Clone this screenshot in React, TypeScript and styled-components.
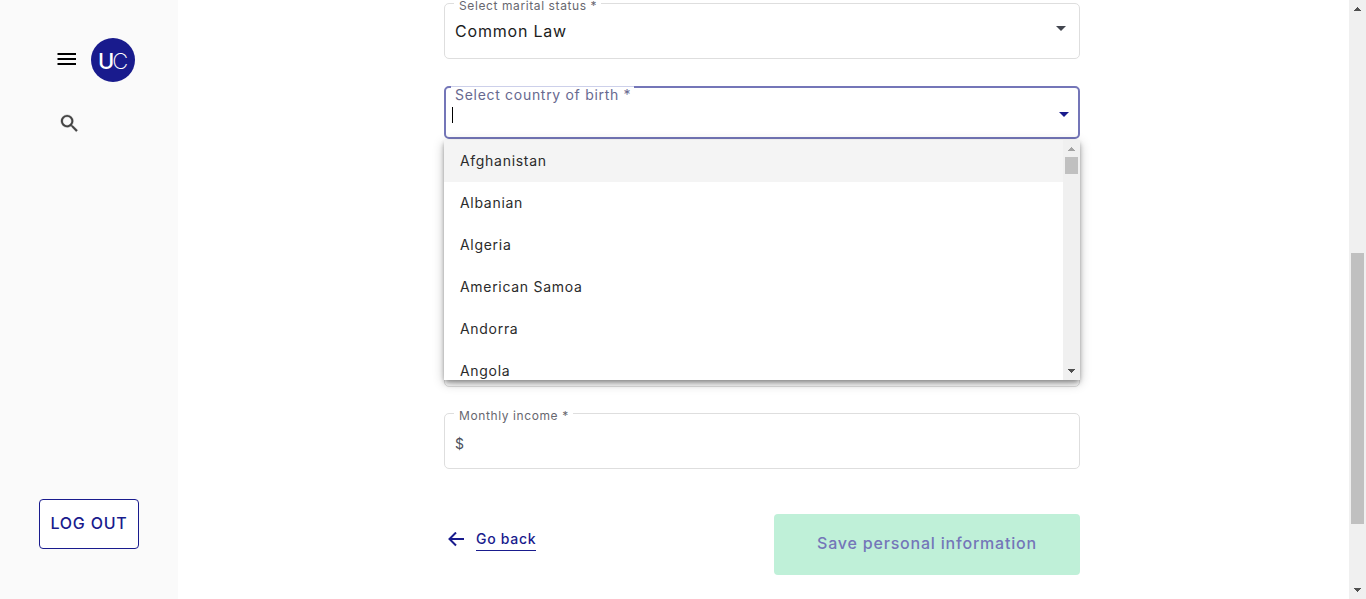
import React from "react";
import styled, { createGlobalStyle, css } from "styled-components";

const navy = "#191b8d";

const GlobalStyle = createGlobalStyle`
  *, *::before, *::after { box-sizing: border-box; letter-spacing: 0.05em; }
  body {
    margin: 0;
    background: #fff;
    font-family: Inter, "Liberation Sans", sans-serif;
    overflow: hidden;
  }
  button, input, select { font: inherit; }
`;

const Page = styled.div`
  display: flex;
  height: 100vh;
  overflow: hidden;
`;

const Sidebar = styled.aside`
  flex: 0 0 178px;
  display: flex;
  flex-direction: column;
  align-items: flex-start;
  padding: 38px 39px 50px;
  background: #fafafa;
`;

const Brand = styled.div`
  display: flex;
  align-items: center;
  gap: 13px;
  padding-left: 16px;
`;

const IconButton = styled.button`
  display: flex;
  padding: 0;
  border: 0;
  background: none;
  color: #000;
`;

const SearchButton = styled(IconButton)`
  margin: 30px 0 0 19px;
  color: #424242;
`;

const LogoText = styled.text`
  fill: #fff;
  font-size: 22px;
  font-weight: 500;

  tspan {
    font-weight: 200;
  }

  &, tspan {
    letter-spacing: 0;
  }
`;

const LogOut = styled.button`
  width: 100px;
  height: 50px;
  margin-top: auto;
  padding: 0 0 2px;
  border: 1px solid ${navy};
  border-radius: 4px;
  background: #fff;
  color: ${navy};
  font-size: 16px;
  font-weight: 500;
`;

const Main = styled.main`
  flex: 1;
  min-width: 0;
  padding: 3px 269px 0 266px;
`;

const Form = styled.form`
  display: flex;
  flex-direction: column;
  gap: 26px;
`;

const Slot = styled.div`
  display: flex;
  align-items: center;
  height: 56px;
`;

const Box = styled.div<{ $active?: boolean }>`
  position: relative;
  flex: 1;
  display: flex;
  height: 56px;
  border: 1px solid #dedede;
  border-radius: 5px;
  ${(p) =>
    p.$active &&
    css`
      height: 53px;
      margin-bottom: 1px;
      border: 2px solid #7476b8;
    `}
`;

const Label = styled.label<{ $active?: boolean }>`
  position: absolute;
  top: -6px;
  left: 9px;
  padding: 0 4px 0 5px;
  background: #fff;
  color: #67676f;
  font-size: 12px;
  line-height: 16px;
  white-space: nowrap;
  ${(p) =>
    p.$active &&
    css`
      top: -2px;
      left: 5px;
      padding: 0 3px 0 4px;
      border-top: 1px solid #cdd0ea;
      color: #67698f;
      font-size: 14px;
    `}
`;

const Select = styled.select`
  flex: 1;
  appearance: none;
  padding: 0 10px;
  border: 0;
  background: none;
  color: #1c1c1c;
  font-size: 16px;
`;

const TextInput = styled.input`
  flex: 1;
  min-width: 0;
  padding: 0 10px;
  border: 0;
  outline: 0;
  background: none;
  color: #1c1c1c;
  font-size: 16px;
`;

const Prefix = styled.span`
  align-self: center;
  padding: 6px 0 0 10px;
  color: #4a4f5a;
  font-size: 14px;
  line-height: 20px;
`;

const Caret = styled.span`
  position: absolute;
  top: 19px;
  left: 6px;
  width: 1px;
  height: 16px;
  background: #000;
`;

const Arrow = styled.svg<{ $active?: boolean }>`
  position: absolute;
  top: ${(p) => (p.$active ? 24 : 22)}px;
  right: ${(p) => (p.$active ? 9 : 13)}px;
  width: 10px;
  height: 5px;
  fill: ${(p) => (p.$active ? navy : "#42464f")};
`;

const Panel = styled.div`
  position: absolute;
  z-index: 1;
  top: 52px;
  left: -2px;
  right: -2px;
  display: flex;
  height: 240px;
  border-radius: 0 0 4px 4px;
  background: #fff;
  box-shadow: 0 2px 4px -1px rgba(0, 0, 0, 0.25), 0 4px 5px rgba(0, 0, 0, 0.16),
    0 3px 12px rgba(0, 0, 0, 0.24);
`;

const Options = styled.ul`
  flex: 1;
  height: 100%;
  margin: 0;
  padding: 0;
  overflow: hidden;
  list-style: none;
`;

const Option = styled.li<{ $hover?: boolean }>`
  height: 42px;
  padding: 0 16px;
  background: ${(p) => (p.$hover ? "#f4f4f4" : "#fff")};
  color: #2b2b2b;
  font-size: 14px;
  line-height: 42px;
`;

const Track = styled.div`
  flex: 0 0 17px;
  display: flex;
  flex-direction: column;
  align-items: center;
  justify-content: space-between;
  padding: 7px 0;
  background: #f0f0f0;
`;

const Rail = styled.div`
  flex: 1;
  align-self: stretch;
  display: flex;
  flex-direction: column;
  align-items: center;
  margin: 6px 0;
`;

const Thumb = styled.div<{ $size: number }>`
  flex: ${(p) => p.$size} 1 0;
  width: 13px;
  background: #c0c0c0;
`;

const Space = styled.div<{ $share: number }>`
  flex: ${(p) => p.$share} 1 0;
`;

const Actions = styled.div`
  display: flex;
  justify-content: space-between;
  margin-top: 19px;
`;

const Back = styled.a`
  display: flex;
  align-items: center;
  align-self: flex-start;
  gap: 11px;
  margin: 14px 0 0 4px;
  color: ${navy};
  font-size: 14px;
  font-weight: 500;
  line-height: 22px;
  text-decoration: none;
`;

const BackText = styled.span`
  border-bottom: 1px solid ${navy};
`;

const Save = styled.button`
  width: 306px;
  height: 61px;
  padding: 0 0 3px;
  border: 0;
  border-radius: 4px;
  background: #bff0d8;
  color: #7476b8;
  font-size: 16px;
  font-weight: 500;
`;

const countries = ["Afghanistan", "Albanian", "Algeria", "American Samoa", "Andorra", "Angola"];

function DropArrow({ active }: { active?: boolean }) {
  return (
    <Arrow $active={active} viewBox="0 0 10 5" aria-hidden="true">
      <path d="M0 0h10L5 5z" />
    </Arrow>
  );
}

function ScrollBar({ before, size, after, faded }: { before: number; size: number; after: number; faded?: boolean }) {
  return (
    <Track aria-hidden="true">
      <svg width="7" height="4" viewBox="0 0 7 4" shapeRendering="crispEdges">
        <path d="M3 0h1v1h1v1h1v1h1v1H0V3h1V2h1V1h1z" fill={faded ? "#a3a3a3" : "#505050"} />
      </svg>
      <Rail>
        <Space $share={before} />
        <Thumb $size={size} />
        <Space $share={after} />
      </Rail>
      <svg width="7" height="4" viewBox="0 0 7 4" shapeRendering="crispEdges">
        <path d="M0 0h7v1H6v1H5v1H4v1H3V3H2V2H1V1H0z" fill="#505050" />
      </svg>
    </Track>
  );
}

function EmptyField({ name }: { name: string }) {
  return (
    <Slot>
      <Box>
        <TextInput aria-label={name} />
      </Box>
    </Slot>
  );
}

export default function App() {
  return (
    <Page>
      <GlobalStyle />
      <Sidebar>
        <Brand>
          <IconButton aria-label="Menu">
            <svg width="23" height="24" viewBox="0 0 23 24">
              <path d="M2.500 5H21v2H2.500zM2.500 10H21v2H2.500zM2.500 15H21v2H2.500z" />
            </svg>
          </IconButton>
          <svg width="44" height="44" viewBox="0 0 44 44" role="img" aria-label="UC">
            <circle cx="22" cy="22" r="22" fill={navy} />
            <LogoText x="7" y="31">
              U<tspan dx="-2">C</tspan>
            </LogoText>
          </svg>
        </Brand>
        <SearchButton aria-label="Search">
          <svg width="23" height="23" viewBox="0 0 24 24" fill="currentColor" stroke="currentColor" strokeWidth="0.3">
            <path d="M15.5 14h-.79l-.28-.27A6.47 6.47 0 0 0 16 9.5 6.5 6.5 0 1 0 9.500 16c1.610 0 3.090-.59 4.230-1.570l.27.28v.79l5 4.990L20.490 19l-4.990-5zm-6 0C7.010 14 5 11.990 5 9.500S7.010 5 9.500 5 14 7.010 14 9.500 11.990 14 9.500 14z" />
          </svg>
        </SearchButton>
        <LogOut>LOG OUT</LogOut>
      </Sidebar>
      <Main>
        <Form>
          <Slot>
            <Box>
              <Label htmlFor="marital">Select marital status *</Label>
              <Select id="marital" defaultValue="Common Law">
                <option>Common Law</option>
              </Select>
              <DropArrow />
            </Box>
          </Slot>
          <Slot>
            <Box $active>
              <Label $active htmlFor="country">Select country of birth *</Label>
              <TextInput id="country" role="combobox" aria-expanded="true" aria-controls="countries" />
              <Caret />
              <DropArrow active />
              <Panel>
                <Options id="countries" role="listbox">
                  {countries.map((name, i) => (
                    <Option key={name} role="option" aria-selected={i === 0} $hover={i === 0}>
                      {name}
                    </Option>
                  ))}
                </Options>
                <ScrollBar before={0} size={17} after={190} faded />
              </Panel>
            </Box>
          </Slot>
          <EmptyField name="City of birth" />
          <EmptyField name="Nationality" />
          <EmptyField name="Occupation" />
          <Slot>
            <Box>
              <Label htmlFor="income">Monthly income *</Label>
              <Prefix>$</Prefix>
              <TextInput id="income" />
            </Box>
          </Slot>
          <Actions>
            <Back href="#back">
              <svg width="17" height="16" viewBox="0 0 17 16" fill="none" stroke="currentColor" strokeWidth="2">
                <path d="M16 7H2M8 0.500 1.500 7l6.500 6.500" />
              </svg>
              <BackText>Go back</BackText>
            </Back>
            <Save type="button">Save personal information</Save>
          </Actions>
        </Form>
      </Main>
      <ScrollBar before={236} size={271} after={58} />
    </Page>
  );
}
